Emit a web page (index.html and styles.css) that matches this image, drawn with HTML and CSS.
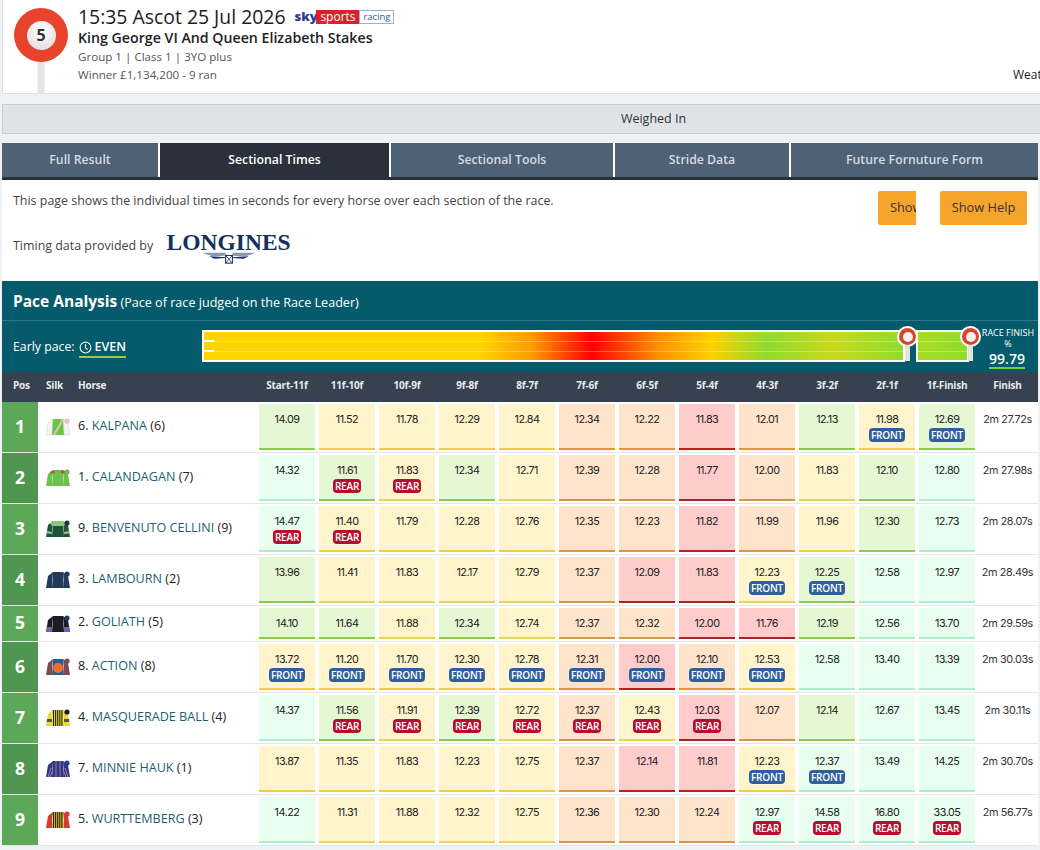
FILE: index.html
```html
<!DOCTYPE html>
<html lang="en">
<head>
  <meta charset="UTF-8" />
  <title>15:35 Ascot 25 Jul 2026 - Sectional Times</title>
  <link rel="stylesheet" href="styles.css">
</head>
<body>
  <div class="race-header">
    <div class="ball-wrap">
      <div class="post"></div>
      <div class="ball"><span>5</span></div>
    </div>
    <div class="race-info">
      <div class="race-title">15:35 Ascot 25 Jul 2026
        <span class="sky-logo"><b class="sky">sky</b><span class="sports">sports</span><span class="racing">racing</span></span>
      </div>
      <div class="race-name">King George VI And Queen Elizabeth Stakes</div>
      <div class="race-meta">Group 1 | Class 1 | 3YO plus</div>
      <div class="race-meta">Winner £1,134,200 - 9 ran</div>
    </div>
    <div class="weather">Weather</div>
  </div>

  <div class="status-bar">Weighed In</div>

  <div class="main">
    <div class="tabs">
      <div class="tab">Full Result</div>
      <div class="tab active">Sectional Times</div>
      <div class="tab">Sectional Tools</div>
      <div class="tab">Stride Data</div>
      <div class="tab">Future Fornuture Form</div>
    </div>

    <div class="intro">
      <div class="intro-text">
        <p>This page shows the individual times in seconds for every horse over each section of the race.</p>
        <div class="timing">
          <span>Timing data provided by</span>
          <div class="longines">
            <div class="longines-name">LONGINES</div>
            <svg class="wings" width="62" height="12" viewBox="0 0 62 14">
              <path d="M0 1 H27 V4 L20 5 H12 L5 3 Z" fill="#8c9bb0"/>
              <path d="M62 1 H35 V4 L42 5 H50 L57 3 Z" fill="#8c9bb0"/>
              <path d="M8 5 L27 6 V7 L14 8 Z M54 5 L35 6 V7 L48 8 Z" fill="#14305c"/>
              <rect x="27" y="4" width="8" height="9" fill="none" stroke="#14305c" stroke-width="1.2"/>
              <path d="M27 4 L35 13 M35 4 L27 13" stroke="#14305c"/>
            </svg>
          </div>
        </div>
      </div>
      <div class="intro-buttons">
        <div class="btn-clip"><button class="btn">Show Splits</button></div>
        <button class="btn">Show Help</button>
      </div>
    </div>

    <div class="pace">
      <div class="pace-title"><b>Pace Analysis</b> (Pace of race judged on the Race Leader)</div>
      <div class="pace-body">
        <div class="early">Early pace:
          <span class="even">
            <svg width="13" height="13" viewBox="0 0 14 14" fill="none" stroke="#fff" stroke-width="1.1"><circle cx="7" cy="7" r="5.8"/><path d="M7 3.2 V7.4 L9.4 9.2"/></svg>
            EVEN
          </span>
        </div>
        <div class="track">
          <div class="seg seg-main"><i class="tick tick-a"></i><i class="tick tick-b"></i></div>
          <div class="seg seg-last"></div>
          <div class="marker marker-a"><i></i></div>
          <div class="marker marker-b"><i></i></div>
        </div>
        <div class="finish-pct">
          <div class="finish-label">RACE FINISH<br>%</div>
          <div class="finish-value">99.79</div>
        </div>
      </div>
    </div>

    <div class="row head">
      <div class="h-pos">Pos</div>
      <div class="h-silk">Silk</div>
      <div class="h-horse">Horse</div>
      <div>Start-11f</div><div>11f-10f</div><div>10f-9f</div><div>9f-8f</div><div>8f-7f</div><div>7f-6f</div>
      <div>6f-5f</div><div>5f-4f</div><div>4f-3f</div><div>3f-2f</div><div>2f-1f</div><div>1f-Finish</div>
      <div>Finish</div>
    </div>

    <div class="row">
      <div class="pos">1</div>
      <div class="silk"><svg width="24" height="18" viewBox="0 0 24 18"><path d="M7 1 L2 5 L0 17 H6 V9 Z M17 1 L22 5 L24 17 H18 V9 Z" fill="#f4f4f4" stroke="#ccc" stroke-width=".5"/><path d="M7 1 H17 L18 17 H6 Z" fill="#6cc24a"/><path d="M17 1 L8 17" stroke="#d9c3a5" stroke-width="2.2"/><circle cx="21" cy="3" r="2.6" fill="#f3b8c8"/></svg></div>
      <div class="horse"><span>6. <a>KALPANA</a> (6)</span></div>
      <div class="cell g">14.09</div><div class="cell y">11.52</div><div class="cell y">11.78</div><div class="cell y">12.29</div>
      <div class="cell y">12.84</div><div class="cell o">12.34</div><div class="cell o">12.22</div><div class="cell r">11.83</div>
      <div class="cell o">12.01</div><div class="cell g">12.13</div>
      <div class="cell y">11.98<span class="tag front">FRONT</span></div><div class="cell g">12.69<span class="tag front">FRONT</span></div>
      <div class="finish">2m 27.72s</div>
    </div>

    <div class="row dull even-row">
      <div class="pos">2</div>
      <div class="silk"><svg width="24" height="18" viewBox="0 0 24 18"><path d="M7 1 H17 L18 17 H6 Z M7 1 L2 5 L0 17 H6 V9 Z M17 1 L22 5 L24 17 H18 V9 Z" fill="#6cc24a"/><path d="M4 3 L8 1 L9 4 L5 5 Z M15 1 L19 2 L19 5 L15 4 Z" fill="#a5653a"/><circle cx="21" cy="3" r="2.6" fill="#6cb85a"/></svg></div>
      <div class="horse"><span>1. <a>CALANDAGAN</a> (7)</span></div>
      <div class="cell m">14.32</div><div class="cell g">11.61<span class="tag rear">REAR</span></div><div class="cell y">11.83<span class="tag rear">REAR</span></div><div class="cell g">12.34</div>
      <div class="cell y">12.71</div><div class="cell o">12.39</div><div class="cell o">12.28</div><div class="cell r">11.77</div>
      <div class="cell o">12.00</div><div class="cell y">11.83</div><div class="cell g">12.10</div><div class="cell m">12.80</div>
      <div class="finish">2m 27.98s</div>
    </div>

    <div class="row">
      <div class="pos">3</div>
      <div class="silk"><svg width="24" height="18" viewBox="0 0 24 18"><path d="M7 1 H17 L18 17 H6 Z M7 1 L2 5 L0 17 H6 V9 Z M17 1 L22 5 L24 17 H18 V9 Z" fill="#1f5236"/><path d="M4 3.5 L7 1 H17 L20 3.5 L18 6 H6 Z" fill="#8fc57a"/><path d="M1 11 L6 12 V14 L.7 13.5 Z M23 11 L18 12 V14 L23.3 13.5 Z" fill="#8fc57a"/><circle cx="21" cy="3" r="2.6" fill="#203a38"/></svg></div>
      <div class="horse"><span>9. <a>BENVENUTO CELLINI</a> (9)</span></div>
      <div class="cell m">14.47<span class="tag rear">REAR</span></div><div class="cell y">11.40<span class="tag rear">REAR</span></div><div class="cell y">11.79</div><div class="cell y">12.28</div>
      <div class="cell y">12.76</div><div class="cell o">12.35</div><div class="cell o">12.23</div><div class="cell r">11.82</div>
      <div class="cell o">11.99</div><div class="cell y">11.96</div><div class="cell g">12.30</div><div class="cell m">12.73</div>
      <div class="finish">2m 28.07s</div>
    </div>

    <div class="row dull even-row">
      <div class="pos">4</div>
      <div class="silk"><svg width="24" height="18" viewBox="0 0 24 18"><path d="M7 1 H17 L18 17 H6 Z M7 1 L2 5 L0 17 H6 V9 Z M17 1 L22 5 L24 17 H18 V9 Z" fill="#223a5a"/><circle cx="21" cy="3" r="2.6" fill="#223a5a"/></svg></div>
      <div class="horse"><span>3. <a>LAMBOURN</a> (2)</span></div>
      <div class="cell g">13.96</div><div class="cell y">11.41</div><div class="cell y">11.83</div><div class="cell y">12.17</div>
      <div class="cell y">12.79</div><div class="cell o">12.37</div><div class="cell r">12.09</div><div class="cell r">11.83</div>
      <div class="cell y">12.23<span class="tag front">FRONT</span></div><div class="cell g">12.25<span class="tag front">FRONT</span></div><div class="cell m">12.58</div><div class="cell m">12.97</div>
      <div class="finish">2m 28.49s</div>
    </div>

    <div class="row dull">
      <div class="pos">5</div>
      <div class="silk"><svg width="24" height="18" viewBox="0 0 24 18"><path d="M7 1 H17 L18 17 H6 Z M7 1 L2 5 L0 17 H6 V9 Z M17 1 L22 5 L24 17 H18 V9 Z" fill="#1c1c22"/><path d="M1 12 L6 12 V17 H.3 Z M23 12 L18 12 V17 H23.7 Z" fill="#6a6aa8"/><circle cx="21" cy="3" r="2.6" fill="#223a5a"/></svg></div>
      <div class="horse"><span>2. <a>GOLIATH</a> (5)</span></div>
      <div class="cell g">14.10</div><div class="cell g">11.64</div><div class="cell y">11.88</div><div class="cell g">12.34</div>
      <div class="cell y">12.74</div><div class="cell o">12.37</div><div class="cell o">12.32</div><div class="cell r">12.00</div>
      <div class="cell r">11.76</div><div class="cell g">12.19</div><div class="cell m">12.56</div><div class="cell m">13.70</div>
      <div class="finish">2m 29.59s</div>
    </div>

    <div class="row even-row">
      <div class="pos">6</div>
      <div class="silk"><svg width="24" height="18" viewBox="0 0 24 18"><path d="M7 1 L2 5 L0 17 H6 V9 Z M17 1 L22 5 L24 17 H18 V9 Z" fill="#7a4a55"/><path d="M7 1 H17 L18 17 H6 Z" fill="#2a5f92"/><circle cx="12" cy="10" r="5" fill="#ee6f2b"/><circle cx="21" cy="3" r="2.6" fill="#7a4a55"/></svg></div>
      <div class="horse"><span>8. <a>ACTION</a> (8)</span></div>
      <div class="cell y">13.72<span class="tag front">FRONT</span></div><div class="cell y">11.20<span class="tag front">FRONT</span></div><div class="cell y">11.70<span class="tag front">FRONT</span></div><div class="cell y">12.30<span class="tag front">FRONT</span></div>
      <div class="cell y">12.78<span class="tag front">FRONT</span></div><div class="cell o">12.31<span class="tag front">FRONT</span></div><div class="cell r">12.00<span class="tag front">FRONT</span></div><div class="cell o">12.10<span class="tag front">FRONT</span></div>
      <div class="cell y">12.53<span class="tag front">FRONT</span></div><div class="cell m">12.58</div><div class="cell m">13.40</div><div class="cell m">13.39</div>
      <div class="finish">2m 30.03s</div>
    </div>

    <div class="row dull">
      <div class="pos">7</div>
      <div class="silk"><svg width="24" height="18" viewBox="0 0 24 18"><path d="M7 1 H17 L18 17 H6 Z M7 1 L2 5 L0 17 H6 V9 Z M17 1 L22 5 L24 17 H18 V9 Z" fill="#e6d93f"/><path d="M7.5 1 V17 M9.6 1 V17 M11.7 1 V17 M13.8 1 V17 M15.9 1 V17" stroke="#23231c" stroke-width="1.1"/><path d="M1 10 L6 10 V13 L.6 13 Z M23 10 L18 10 V13 L23.4 13 Z" fill="#55564a"/><circle cx="21" cy="3" r="2.6" fill="#1c1c22"/></svg></div>
      <div class="horse"><span>4. <a>MASQUERADE BALL</a> (4)</span></div>
      <div class="cell m">14.37</div><div class="cell g">11.56<span class="tag rear">REAR</span></div><div class="cell y">11.91<span class="tag rear">REAR</span></div><div class="cell g">12.39<span class="tag rear">REAR</span></div>
      <div class="cell y">12.72<span class="tag rear">REAR</span></div><div class="cell o">12.37<span class="tag rear">REAR</span></div><div class="cell y">12.43<span class="tag rear">REAR</span></div><div class="cell r">12.03<span class="tag rear">REAR</span></div>
      <div class="cell o">12.07</div><div class="cell g">12.14</div><div class="cell m">12.67</div><div class="cell m">13.45</div>
      <div class="finish">2m 30.11s</div>
    </div>

    <div class="row even-row">
      <div class="pos">8</div>
      <div class="silk"><svg width="24" height="18" viewBox="0 0 24 18"><path d="M7 1 H17 L18 17 H6 Z M7 1 L2 5 L0 17 H6 V9 Z M17 1 L22 5 L24 17 H18 V9 Z" fill="#35357f"/><path d="M10 1 V17 M14 1 V17 M2 17 L5 8 M4 17 L6 12 M22 17 L19 8 M20 17 L18 12" stroke="#9a9ac8" stroke-width=".8"/><circle cx="21" cy="3" r="2.6" fill="#2f3b99"/></svg></div>
      <div class="horse"><span>7. <a>MINNIE HAUK</a> (1)</span></div>
      <div class="cell y">13.87</div><div class="cell y">11.35</div><div class="cell y">11.83</div><div class="cell y">12.23</div>
      <div class="cell y">12.75</div><div class="cell o">12.37</div><div class="cell r">12.14</div><div class="cell r">11.81</div>
      <div class="cell y">12.23<span class="tag front">FRONT</span></div><div class="cell m">12.37<span class="tag front">FRONT</span></div><div class="cell m">13.49</div><div class="cell m">14.25</div>
      <div class="finish">2m 30.70s</div>
    </div>

    <div class="row dull">
      <div class="pos">9</div>
      <div class="silk"><svg width="24" height="18" viewBox="0 0 24 18"><path d="M7 1 L2 5 L0 17 H6 V9 Z M17 1 L22 5 L24 17 H18 V9 Z" fill="#d63a35"/><path d="M7 1 H17 L18 17 H6 Z" fill="#d9b92f"/><path d="M7.5 1 V17 M9.6 1 V17 M11.7 1 V17 M13.8 1 V17 M15.9 1 V17" stroke="#23231c" stroke-width="1.1"/><circle cx="21" cy="3" r="2.6" fill="#d63a35"/></svg></div>
      <div class="horse"><span>5. <a>WURTTEMBERG</a> (3)</span></div>
      <div class="cell m">14.22</div><div class="cell y">11.31</div><div class="cell y">11.88</div><div class="cell y">12.32</div>
      <div class="cell y">12.75</div><div class="cell o">12.36</div><div class="cell o">12.30</div><div class="cell o">12.24</div>
      <div class="cell m">12.97<span class="tag rear">REAR</span></div><div class="cell m">14.58<span class="tag rear">REAR</span></div><div class="cell m">16.80<span class="tag rear">REAR</span></div><div class="cell m">33.05<span class="tag rear">REAR</span></div>
      <div class="finish">2m 56.77s</div>
    </div>
  </div>
</body>
</html>
```

FILE: styles.css
```css
html, body {
  height: 850px;
  overflow: hidden;
}

body {
  margin: 0;
  padding-left: 2px;
  background: #eef2f5;
  color: #222;
  font-family: "Open Sans", sans-serif;
  font-size: 12px;
}

/* race header */
.race-header {
  display: flex;
  height: 93px;
  background: white;
  border-bottom: 1px solid #dde1e5;
  border-left: 1px solid #dde1e5;
  box-sizing: content-box;
}

.ball-wrap {
  position: relative;
  width: 75px;
}

.ball {
  position: absolute;
  top: 8px;
  left: 11px;
  width: 54px;
  height: 54px;
  border-radius: 50%;
  background: #e8432b;
  display: flex;
  align-items: center;
  justify-content: center;
}

.ball span {
  width: 29px;
  height: 29px;
  border-radius: 50%;
  background: radial-gradient(circle at 50% 35%, #fff, #d8d8d8);
  text-align: center;
  line-height: 29px;
  font-weight: 700;
  font-size: 16px;
  color: #333;
}

.post {
  position: absolute;
  top: 58px;
  left: 34px;
  width: 6px;
  height: 35px;
  background: #e4e4e4;
  border-left: 1px solid #f2f2f2;
  border-right: 1px solid #f2f2f2;
}

.race-info {
  padding-top: 5px;
}

.race-title {
  font-size: 19.4px;
  line-height: 23px;
  font-weight: 500;
  color: #1c1c1c;
  display: flex;
  align-items: center;
  gap: 9px;
  white-space: nowrap;
}

.sky-logo {
  display: flex;
  align-items: center;
  height: 14px;
  font-size: 11px;
}

.sky {
  color: #2a3c8c;
  font-size: 13px;
  font-weight: 800;
  width: 22px;
}

.sports {
  background: #e01f2d;
  color: white;
  width: 43px;
  height: 14px;
  line-height: 13px;
  text-align: center;
  font-size: 12px;
}

.racing {
  border: 1px solid #9ab0d0;
  color: #3a5aa0;
  width: 33px;
  height: 12px;
  line-height: 11px;
  text-align: center;
  font-size: 9.5px;
}

.race-name {
  font-size: 14.2px;
  line-height: 20px;
  font-weight: 600;
  color: #222;
  white-space: nowrap;
}

.race-meta {
  font-size: 11.6px;
  line-height: 18px;
  color: #555;
  white-space: nowrap;
}

.weather {
  position: absolute;
  left: 1013px;
  top: 68px;
  font-size: 12px;
  line-height: 14px;
  white-space: nowrap;
}

.status-bar {
  margin-top: 10px;
  height: 28px;
  line-height: 28px;
  padding-left: 264px;
  text-align: center;
  background: #dfe3e7;
  border-top: 1px solid #c9cdd1;
  border-bottom: 1px solid #c9cdd1;
  border-left: 1px solid #c9cdd1;
  font-size: 12.5px;
  color: #333;
}

.main {
  margin-top: 9px;
  width: 1036px;
  background: white;
}

/* tabs */
.tabs {
  display: grid;
  grid-template-columns: 156px 229px 222px 174px 1fr;
  gap: 2px;
  background: white;
  border-bottom: 3px solid #2a313b;
}

.tab {
  height: 34px;
  line-height: 33px;
  text-align: center;
  background: #4e6175;
  color: #d5dbe1;
  font-weight: 600;
  font-size: 12.3px;
}

.tab.active {
  background: #2a313b;
  color: white;
}

/* intro */
.intro {
  display: flex;
  justify-content: space-between;
  height: 101px;
}

.intro-text {
  padding: 13px 0 0 11px;
  color: #444;
  font-size: 12.45px;
}

.intro-text p {
  margin: 0;
  line-height: 16px;
}

.timing {
  display: flex;
  align-items: flex-start;
  gap: 13px;
  margin-top: 29px;
  line-height: 16px;
}

.longines {
  width: 125px;
  margin-top: -6px;
  text-align: center;
}

.longines-name {
  font-family: "Liberation Serif", serif;
  font-weight: 700;
  font-size: 23.5px;
  line-height: 20px;
  color: #14305c;
  white-space: nowrap;
}

.wings {
  display: block;
  margin: 0 auto;
}

.intro-buttons {
  display: flex;
  gap: 24px;
  padding: 11px 11px 0 0;
}

.btn-clip {
  width: 38px;
  height: 34px;
  overflow: hidden;
}

.btn {
  height: 34px;
  width: 87px;
  padding: 0 0 2px;
  border: none;
  border-radius: 2px;
  background: #f5a52b;
  color: #333;
  font-family: inherit;
  font-size: 12.8px;
  font-weight: 500;
  white-space: nowrap;
}

.btn-clip .btn {
  text-align: left;
  padding-left: 12px;
}

/* pace */
.pace {
  background: #055a6b;
  color: white;
}

.pace-title {
  height: 39px;
  line-height: 41px;
  padding-left: 11px;
  font-size: 12.6px;
  border-bottom: 1px solid #2f7786;
}

.pace-title b {
  font-size: 15.5px;
  font-weight: 700;
}

.pace-body {
  position: relative;
  height: 51px;
}

.early {
  position: absolute;
  left: 11px;
  top: 17px;
  font-size: 12.3px;
  line-height: 18px;
  display: flex;
  gap: 4px;
}

.even {
  display: flex;
  align-items: center;
  gap: 3px;
  font-weight: 600;
  font-size: 12.5px;
  border-bottom: 2px solid #a4c93a;
}

.track {
  position: absolute;
  left: 200px;
  top: 9px;
  display: flex;
  gap: 11px;
}

.seg {
  position: relative;
  height: 28px;
  border: 2px solid white;
  background-image:
    linear-gradient(transparent 9px, rgba(255,255,255,.3) 9px, rgba(255,255,255,.3) 10px, transparent 10px, transparent 19px, rgba(255,255,255,.3) 19px, rgba(255,255,255,.3) 20px, transparent 20px),
    var(--heat);
}

.seg-main {
  width: 699px;
  --heat: linear-gradient(90deg, #ffd400 0, #ffd400 39.5%, #ff9a00 47%, #ff0000 55.5%, #ff9000 65%, #ffd000 72.5%, #8fdc2c 80.5%, #c9d81c 90%, #8fdc2c 100%);
}

.seg-last {
  width: 49px;
  --heat: linear-gradient(90deg, #a8dc24, #8fdc2c);
}

.tick {
  position: absolute;
  left: 0;
  width: 10px;
  height: 2px;
  background: #fff;
}

.tick-a { top: 8px; }
.tick-b { top: 18px; }

.marker {
  position: absolute;
  top: -4px;
  width: 21px;
  height: 21px;
  box-sizing: border-box;
  border-radius: 50%;
  background: #d8452f;
  border: 2px solid white;
}

.marker::after {
  content: "";
  position: absolute;
  left: 6px;
  top: 17px;
  width: 5px;
  height: 16px;
  background: #e2e2e2;
}

.marker i {
  position: absolute;
  left: 3.5px;
  top: 3.5px;
  width: 10px;
  height: 10px;
  border-radius: 50%;
  background: #f6f0ee;
}

.marker-a { left: 695px; }
.marker-b { left: 758px; }

.finish-pct {
  position: absolute;
  left: 977px;
  top: 6px;
  width: 58px;
  text-align: center;
  font-size: 9px;
  line-height: 11px;
}

.finish-value {
  display: inline-block;
  margin: 1px 2px 0 0;
  font-size: 14px;
  line-height: 17px;
  font-weight: 600;
  border-bottom: 2px solid #7ec940;
}

/* table */
.row {
  display: grid;
  grid-template-columns: 36px 40px 179px repeat(12, 60px) 1fr;
  border-bottom: 1px solid #e4e7ea;
  background: white;
}

.head {
  height: 30px;
  padding-bottom: 4px;
  box-sizing: border-box;
  align-items: center;
  background: #364250;
  color: #e8ebee;
  border: none;
  text-align: center;
  font-size: 10px;
  letter-spacing: -.2px;
  font-weight: 700;
}

.h-pos {
  padding-left: 11px;
  text-align: left;
}

.h-silk {
  padding-left: 8px;
  text-align: left;
}

.h-horse {
  text-align: left;
}

.pos {
  display: flex;
  align-items: center;
  justify-content: center;
  padding-bottom: 3px;
  background: #5da858;
  color: white;
  font-weight: 700;
  font-size: 17.5px;
}

.even-row .pos {
  background: #4f9650;
}

.silk {
  display: flex;
  align-items: center;
  padding-left: 8px;
}

.horse {
  display: flex;
  align-items: center;
  padding-bottom: 4px;
  font-size: 12.6px;
  color: #222;
  white-space: nowrap;
}

.horse a {
  color: #1d5f70;
  font-weight: 500;
}

.cell {
  margin: 2px;
  padding: 9px 0 6px;
  border-bottom: 2px solid;
  display: flex;
  flex-direction: column;
  align-items: center;
  font-family: Inter, sans-serif;
  font-size: 10.8px;
  letter-spacing: -.5px;
  line-height: 14px;
  color: #222;
}

.y { background: #fff4cc; border-color: #f2cf37; }
.o { background: #ffe4cc; border-color: #e8952d; }
.r { background: #ffcccc; border-color: #cc1a1a; }
.g { background: #e6f7d4; border-color: #8ccc4c; }
.m { background: #e8ffef; border-color: #aeeecb; }

.dull .y { border-color: #ecd452; }
.dull .o { border-color: #d09a48; }
.dull .r { border-color: #aa2626; }

.tag {
  margin-top: 1px;
  height: 14px;
  line-height: 14px;
  border-radius: 4px;
  color: white;
  text-align: center;
  font-family: "Open Sans", sans-serif;
  font-size: 10px;
  font-weight: 600;
  letter-spacing: -.2px;
}

.front {
  width: 36px;
  background: #2f609d;
}

.rear {
  width: 28px;
  background: #b80d2e;
}

.finish {
  padding-top: 11px;
  text-align: center;
  font-family: Inter, sans-serif;
  font-size: 10.8px;
  letter-spacing: -.35px;
  line-height: 14px;
  color: #333;
}
```
